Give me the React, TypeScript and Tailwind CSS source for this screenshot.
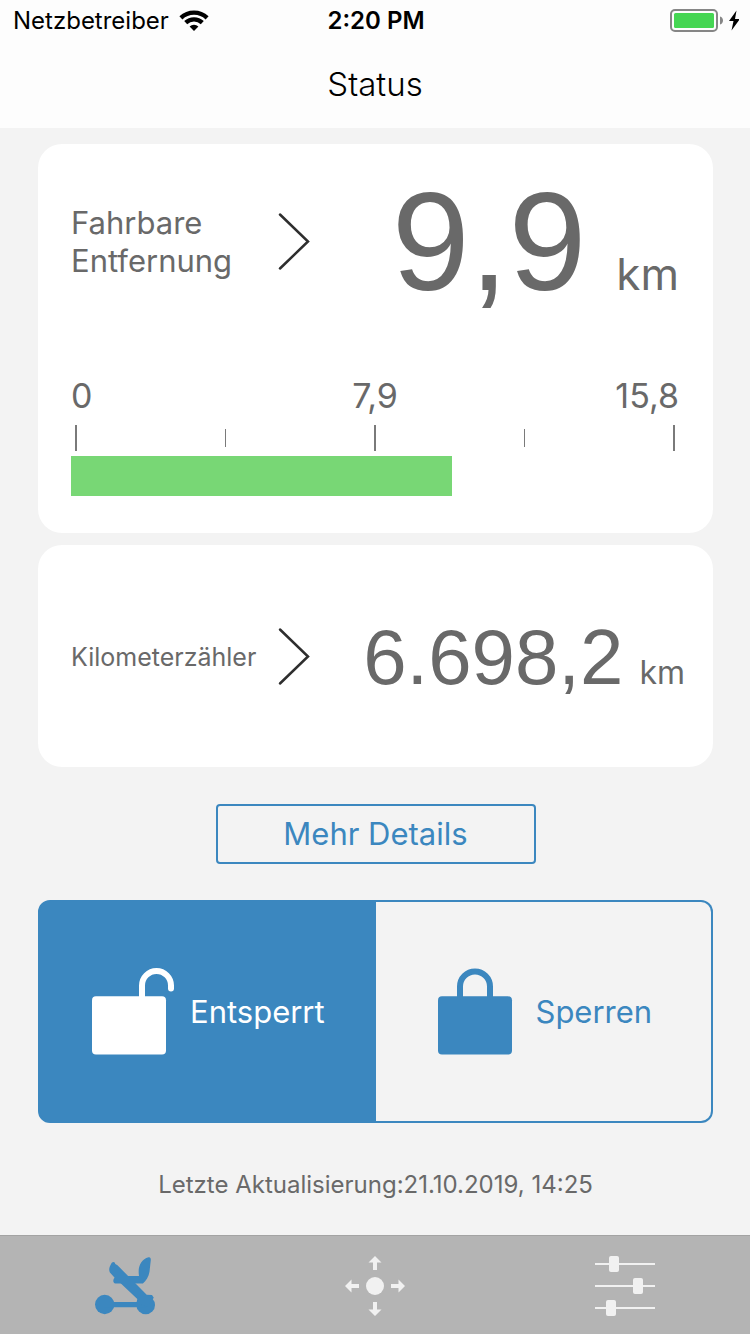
import { useState } from 'react';
import type { ReactNode } from 'react';

const MAX_RANGE = 15.8;
const RANGE = 9.9;

const formatKm = (value: number) => value.toLocaleString('de-DE', { maximumFractionDigits: 1 });

function StatusBar() {
    return (
        <div className="flex h-10 items-center pt-0.5 pr-[11px] pl-[13px] text-black">
            <div className="flex flex-1 items-center gap-2.5">
                <span className="text-2xl leading-8">Netzbetreiber</span>
                <svg width="31" height="22" viewBox="0 0 31 22" fill="none" stroke="#000" strokeWidth="4.4">
                    <path d="M1.900 7.800a19.300 19.300 0 0 1 26.200 0" />
                    <path d="M6.700 12.600a12.200 12.200 0 0 1 16.600 0" />
                    <path d="M15 21l-4.400-4.400a6.200 6.200 0 0 1 8.800 0z" fill="#000" stroke="none" />
                </svg>
            </div>
            <span className="text-2xl leading-8 font-semibold">2:20 PM</span>
            <div className="flex flex-1 items-center justify-end">
                <svg width="72" height="24" viewBox="0 0 72 24">
                    <rect x="4" y="1" width="46" height="21" rx="4" fill="none" stroke="#868686" strokeWidth="2" />
                    <rect x="7" y="4" width="40" height="15" rx="1.5" fill="#45d653" />
                    <path d="M53 7.5c4 1 4 7 0 8z" fill="#868686" />
                    <path d="M69.5 1.500L62 12h4.500L64.500 21.500 73 10h-5z" fill="#000" />
                </svg>
            </div>
        </div>
    );
}

function Chevron() {
    return (
        <svg className="shrink-0" width="32" height="60" viewBox="0 0 32 60" fill="none" stroke="#2e2e2e" strokeWidth="2.5" strokeLinecap="round">
            <path d="M2 2.500l28 27L2 56.500" />
        </svg>
    );
}

function Padlock({ open }: { open: boolean }) {
    return (
        <svg className="shrink-0" width="84" height="88" viewBox="0 0 84 88" fill="none">
            <rect y="28.300" width="74" height="58.300" rx="4" fill="currentColor" />
            {open ? (
                <path d="M50 31V17.500a14.500 14.500 0 0 1 29 0v3" stroke="currentColor" strokeWidth="6" strokeLinecap="round" />
            ) : (
                <path d="M22 31V18.500a15 15 0 0 1 30 0V31" stroke="currentColor" strokeWidth="6" />
            )}
        </svg>
    );
}

function RangeScale() {
    return (
        <div className="mt-16">
            <div className="flex justify-between text-[34px] leading-10">
                <span className="flex-1">0</span>
                <span>{formatKm(MAX_RANGE / 2)}</span>
                <span className="flex-1 text-right">{formatKm(MAX_RANGE)}</span>
            </div>
            <div className="mt-2 flex h-7 items-center justify-between px-1">
                <div className="h-[26px] w-0.5 bg-[#7a7a7a]" />
                <div className="h-[18px] w-px bg-[#7a7a7a]" />
                <div className="h-[26px] w-0.5 bg-[#7a7a7a]" />
                <div className="h-[18px] w-px bg-[#7a7a7a]" />
                <div className="h-[26px] w-0.5 bg-[#7a7a7a]" />
            </div>
            <div className="mt-1 h-10">
                <div className="h-full bg-[#78d775]" style={{ width: `${(RANGE / MAX_RANGE) * 100}%` }} />
            </div>
        </div>
    );
}

interface ModeButtonProps {
    active: boolean;
    onClick: () => void;
    className: string;
    children: ReactNode;
}

function ModeButton({ active, onClick, className, children }: ModeButtonProps) {
    return (
        <button
            type="button"
            aria-pressed={active}
            onClick={onClick}
            className={`flex items-center gap-3.5 border-[#3b87bf] text-[31px] leading-10 ${className} ${active ? 'bg-[#3b87bf] text-white' : 'text-[#3b87bf]'}`}
        >
            {children}
        </button>
    );
}

function TabBar() {
    return (
        <nav className="flex h-[99px] items-center border-t border-[#a3a3a3] bg-[#b4b4b4] pt-0.5 text-[#f1f1f1]">
            <a href="#status" aria-label="Status" className="flex flex-1 justify-center text-[#3b87bf]">
                <svg width="60" height="60" viewBox="0 0 60 60" fill="currentColor">
                    <circle cx="9.700" cy="48.500" r="9.700" />
                    <circle cx="50.700" cy="49" r="9.300" />
                    <path d="M9 46h42v5.300H9z" />
                    {/* seat with the leaf shaped back */}
                    <path d="M20.500 20H44c-1.500-9.500 2-16.700 9.500-18.700 1.700-.4 2.400.7 2.300 2.700l-1.300 11.700c-.7 5-3.500 9-6.600 11.800H20.500c-2.600-.6-2.600-3.500-1.500-5z" />
                    {/* steering column */}
                    <path d="M16.300 7.500l.7-.9q1.500-1 2.700 0l.6 1.400 2.200 1.300L51.700 38.700l5.300.3 1.800 2.800L52 51l-10.500-4 .8-4-23.300-22-4.100-4.500c-1.300-2.700-.7-5.500 1.400-9z" />
                </svg>
            </a>
            <a href="#position" aria-label="Position" className="flex flex-1 justify-center">
                <svg width="60" height="60" viewBox="0 0 60 60" fill="currentColor">
                    <circle cx="30" cy="30" r="9" />
                    <path d="M30 0l6.500 6.500H32V14h-4V6.500h-4.500z" />
                    <path d="M30 60l6.500-6.500H32V46h-4v7.500h-4.500z" />
                    <path d="M0 30l6.500-6.500V28H14v4H6.500v4.500z" />
                    <path d="M60 30l-6.500-6.500V28H46v4h7.500v4.500z" />
                </svg>
            </a>
            <a href="#einstellungen" aria-label="Einstellungen" className="flex flex-1 justify-center">
                <svg width="60" height="60" viewBox="0 0 60 60" fill="currentColor">
                    <path d="M0 7h60v2H0zM0 29h60v2H0zM0 51h60v2H0z" />
                    <rect x="14" y="0" width="10" height="16" rx="2" />
                    <rect x="38" y="22" width="10" height="16" rx="2" />
                    <rect x="11" y="44" width="10" height="16" rx="2" />
                </svg>
            </a>
        </nav>
    );
}

export default function App() {
    const [locked, setLocked] = useState(false);

    return (
        <div className="flex min-h-screen flex-col bg-[#f3f3f3] font-['Inter',sans-serif] text-[#696969]">
            <header className="bg-[#fdfdfd]">
                <StatusBar />
                <h1 className="py-6 text-center text-[33px] leading-10 font-light text-black">Status</h1>
            </header>

            <main className="flex flex-1 flex-col pt-4 pr-[37px] pl-[38px]">
                <section className="rounded-3xl bg-white pt-7 pr-[34px] pb-[37px] pl-[33px]">
                    <div className="flex items-center">
                        <h2 className="w-[207px] text-[31px] leading-[38px]">
                            Fahrbare
                            <br />
                            Entfernung
                        </h2>
                        <Chevron />
                        <div className="flex flex-1 items-baseline justify-end gap-[30px]">
                            <span className="font-['Liberation_Sans',sans-serif] text-[140px] leading-none">{formatKm(RANGE)}</span>
                            <span className="text-[44px] leading-none">km</span>
                        </div>
                    </div>
                    <RangeScale />
                </section>

                <section className="mt-3 flex items-center rounded-3xl bg-white pt-[72px] pr-7 pb-[70px] pl-[33px]">
                    <h2 className="w-[207px] text-[25px] leading-8">Kilometerzähler</h2>
                    <Chevron />
                    <div className="flex flex-1 items-baseline justify-end gap-4">
                        <span className="font-['Liberation_Sans',sans-serif] text-[78px] leading-[80px]">6.698,2</span>
                        <span className="text-[32px] leading-none">km</span>
                    </div>
                </section>

                <button
                    type="button"
                    className="mt-[37px] w-80 self-center rounded border-2 border-[#3b87bf] py-2 text-[31px] leading-10 text-[#3b87bf]"
                >
                    Mehr Details
                </button>

                <div className="mt-9 grid h-[223px] grid-cols-2">
                    <ModeButton active={!locked} onClick={() => setLocked(false)} className="rounded-l-xl border-2 pl-[52px]">
                        <Padlock open />
                        Entsperrt
                    </ModeButton>
                    <ModeButton active={locked} onClick={() => setLocked(true)} className="rounded-r-xl border-2 border-l-0 pl-[62px]">
                        <Padlock open={false} />
                        Sperren
                    </ModeButton>
                </div>

                <p className="mt-[46px] text-center text-2xl leading-8">Letzte Aktualisierung:21.10.2019, 14:25</p>
            </main>

            <TabBar />
        </div>
    );
}
